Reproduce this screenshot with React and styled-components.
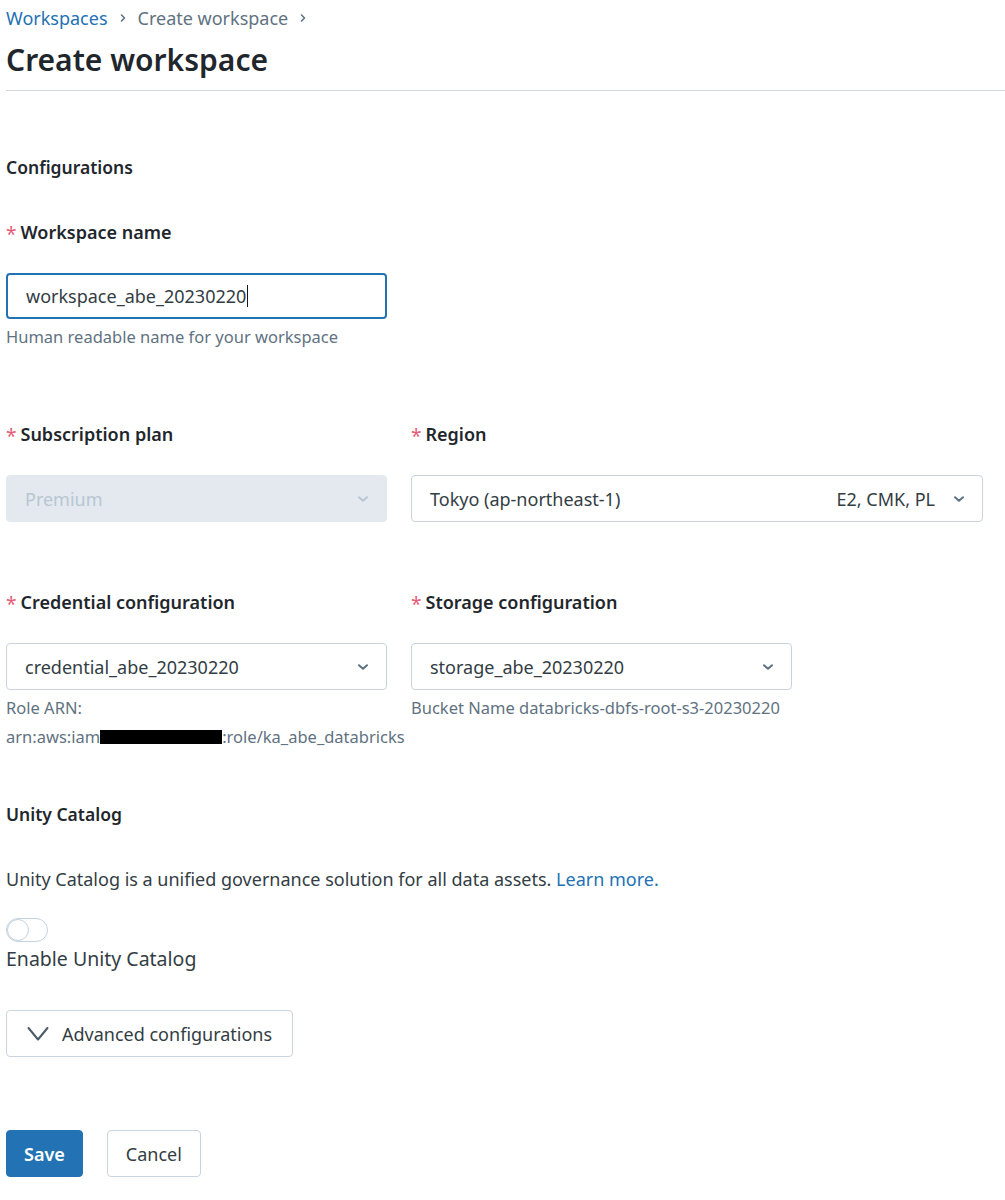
import React from 'react'
import styled, { createGlobalStyle } from 'styled-components'

const GlobalStyle = createGlobalStyle`
  body {
    margin: 0;
    background: #ffffff;
    font-family: 'Noto Sans', 'Open Sans', sans-serif;
    color: #1f272d;
  }
`;

const Page = styled.div`
  padding: 0 0 0 6px;
  width: 999px;
`;

const Crumbs = styled.div`
  display: flex;
  align-items: center;
  gap: 10px;
  height: 36px;
  font-size: 18px;
  color: #5f7281;
`;

const CrumbLink = styled.span`
  color: #2272b4;
`;

const Title = styled.h1`
  margin: 0;
  font-size: 30px;
  font-weight: 600;
  line-height: 48px;
  color: #1f272d;
`;

const Rule = styled.div`
  height: 1px;
  background: #d1d9e1;
  margin-top: 6px;
`;

const SectionTitle = styled.h3`
  margin: 0;
  font-size: 17.5px;
  font-weight: 600;
  line-height: 24px;
  margin-top: ${p => p.top}px;
`;

const Label = styled.div`
  display: flex;
  align-items: center;
  gap: 4px;
  font-size: 18px;
  font-weight: 600;
  line-height: 24px;
  margin-bottom: 29px;
  &::before {
    content: '*';
    color: #e65b77;
    font-weight: 400;
    font-size: 19px;
    position: relative;
    top: 2px;
  }
`;

const Field = styled.div`
  width: ${p => p.width}px;
  display: flex;
  flex-direction: column;
`;

const Row = styled.div`
  display: flex;
  gap: 24px;
  margin-top: ${p => p.top}px;
`;

const TextBox = styled.div`
  height: 46px;
  box-sizing: border-box;
  border: 2px solid #2272b4;
  border-radius: 4px;
  display: flex;
  align-items: center;
  padding: 0 18px;
  font-size: 18px;
  color: #333d44;
`;

const Caret = styled.span`
  display: inline-block;
  width: 1px;
  height: 22px;
  background: #11171c;
  margin-left: 1px;
`;

const Select = styled.div`
  height: 47px;
  box-sizing: border-box;
  border: 1px solid ${p => (p.disabled ? '#e3e9ef' : '#c9d4de')};
  background: ${p => (p.disabled ? '#e3e9ef' : '#ffffff')};
  border-radius: 4px;
  display: flex;
  align-items: center;
  padding: 0 17px 0 18px;
  font-size: 18px;
  color: ${p => (p.disabled ? '#b8c6d2' : '#333d44')};
`;

const SelectText = styled.span`
  flex: 1;
`;

const SelectExtra = styled.span`
  margin-right: 18px;
`;

const Hint = styled.div`
  font-size: 16.5px;
  line-height: 29px;
  color: #5f7281;
  margin-top: 3px;
  white-space: nowrap;
`;

const Redact = styled.span`
  display: inline-block;
  width: 122px;
  height: 14px;
  background: #000;
  vertical-align: -1px;
`;

const Paragraph = styled.p`
  margin: 41px 0 0;
  font-size: 18px;
  line-height: 24px;
  color: #333d44;
`;

const Link = styled.span`
  color: #2272b4;
`;

const Toggle = styled.div`
  margin-top: 27px;
  width: 42px;
  height: 24px;
  box-sizing: border-box;
  border: 1px solid #c4d2de;
  border-radius: 12px;
  display: flex;
  align-items: center;
  &::before {
    content: '';
    width: 22px;
    height: 22px;
    box-sizing: border-box;
    border: 1px solid #c4d2de;
    border-radius: 50%;
  }
`;

const ToggleLabel = styled.div`
  font-size: 19.5px;
  line-height: 26px;
  color: #333d44;
  margin-top: 4px;
`;

const Button = styled.button`
  height: 47px;
  box-sizing: border-box;
  border-radius: 4px;
  font-family: inherit;
  font-size: 18px;
  padding: 0 ${p => p.pad || 17}px;
  border: 1px solid ${p => (p.primary ? '#2272b4' : '#c9d4de')};
  background: ${p => (p.primary ? '#2272b4' : '#ffffff')};
  color: ${p => (p.primary ? '#ffffff' : '#333d44')};
  font-weight: ${p => (p.primary ? 600 : 400)};
  display: inline-flex;
  align-items: center;
  gap: 13px;
`;

const AdvancedWrap = styled.div`
  margin-top: 38px;
`;

const Actions = styled.div`
  display: flex;
  gap: 24px;
  margin-top: 73px;
`;

const Chevron = ({ size = 12, color = '#5f7281', width = 2 }) => (
  <svg width={size} height={size} viewBox="0 0 12 12" fill="none">
    <path d="M2 4.2 L6 7.8 L10 4.2" stroke={color} strokeWidth={width} strokeLinecap="round" strokeLinejoin="round" />
  </svg>
);

const BigChevron = () => (
  <svg width="22" height="16" viewBox="0 0 22 16" fill="none">
    <path d="M1.5 2 L11 13.5 L20.5 2" stroke="#4c5a66" strokeWidth="2" strokeLinecap="round" strokeLinejoin="round" />
  </svg>
);

const CrumbSep = () => (
  <svg width="10" height="10" viewBox="0 0 10 10" fill="none">
    <path d="M3.5 2 L6.5 5 L3.5 8" stroke="#5f7281" strokeWidth="1.6" strokeLinecap="round" strokeLinejoin="round" />
  </svg>
);

export default function App() {
  return (
    <Page>
      <GlobalStyle />
      <Crumbs>
        <CrumbLink>Workspaces</CrumbLink>
        <CrumbSep />
        <span>Create workspace</span>
        <CrumbSep />
      </Crumbs>
      <Title>Create workspace</Title>
      <Rule />

      <SectionTitle top={64}>Configurations</SectionTitle>

      <Row top={41}>
        <Field width={381}>
          <Label>Workspace name</Label>
          <TextBox>workspace_abe_20230220<Caret /></TextBox>
          <Hint>Human readable name for your workspace</Hint>
        </Field>
      </Row>

      <Row top={71}>
        <Field width={381}>
          <Label>Subscription plan</Label>
          <Select disabled>
            <SelectText>Premium</SelectText>
            <Chevron color="#b8c6d2" />
          </Select>
        </Field>
        <Field width={572}>
          <Label>Region</Label>
          <Select>
            <SelectText>Tokyo (ap-northeast-1)</SelectText>
            <SelectExtra>E2, CMK, PL</SelectExtra>
            <Chevron color="#5f7281" />
          </Select>
        </Field>
      </Row>

      <Row top={68}>
        <Field width={381}>
          <Label>Credential configuration</Label>
          <Select>
            <SelectText>credential_abe_20230220</SelectText>
            <Chevron />
          </Select>
          <Hint>
            Role ARN:<br />
            arn:aws:iam<Redact />:role/ka_abe_databricks
          </Hint>
        </Field>
        <Field width={381}>
          <Label>Storage configuration</Label>
          <Select>
            <SelectText>storage_abe_20230220</SelectText>
            <Chevron />
          </Select>
          <Hint>Bucket Name databricks-dbfs-root-s3-20230220</Hint>
        </Field>
      </Row>

      <SectionTitle top={51}>Unity Catalog</SectionTitle>
      <Paragraph>
        Unity Catalog is a unified governance solution for all data assets. <Link>Learn more.</Link>
      </Paragraph>
      <Toggle />
      <ToggleLabel>Enable Unity Catalog</ToggleLabel>

      <AdvancedWrap>
        <Button pad={20}>
          <BigChevron />
          Advanced configurations
        </Button>
      </AdvancedWrap>

      <Actions>
        <Button primary>Save</Button>
        <Button pad={18}>Cancel</Button>
      </Actions>
    </Page>
  );
}
